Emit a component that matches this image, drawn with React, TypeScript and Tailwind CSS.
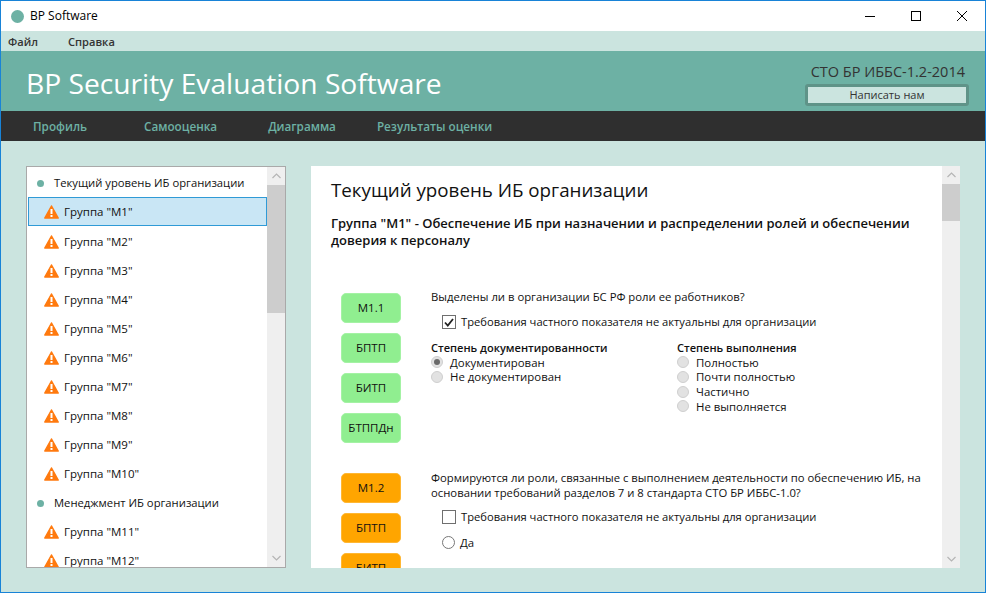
const font = "font-['Open_Sans','Noto_Sans',sans-serif]";

function WarningIcon() {
  return (
    <svg width="15" height="14" viewBox="0 0 15 14" className="shrink-0">
      <path d="M7.5 1 L14.2 13 L0.8 13 Z" fill="#ff7a0f" stroke="#ff7a0f" strokeWidth="1.5" strokeLinejoin="round" />
      <rect x="6.5" y="4" width="2" height="5" fill="#fff" />
      <rect x="6.5" y="10" width="2" height="2" fill="#fff" />
    </svg>
  );
}

function Chevron({ up }: { up?: boolean }) {
  return (
    <svg width="9" height="6" viewBox="0 0 9 6" fill="none" stroke="#b5b5b5" strokeWidth="1.2">
      <path d={up ? "M0.5 5 L4.5 1 L8.5 5" : "M0.5 1 L4.5 5 L8.5 1"} />
    </svg>
  );
}

function Scrollbar({ thumbTop, thumbHeight }: { thumbTop: string; thumbHeight: string }) {
  return (
    <div className="w-[18px] shrink-0 flex flex-col bg-[#efefef]">
      <div className={`${thumbTop} flex items-center justify-center shrink-0`}>
        <Chevron up />
      </div>
      <div className={`${thumbHeight} bg-[#cdcdcd] shrink-0`} />
      <div className="flex-1" />
      <div className="h-[18px] flex items-center justify-center shrink-0">
        <Chevron />
      </div>
    </div>
  );
}

function SectionRow({ label, className }: { label: string; className: string }) {
  return (
    <div className={`flex items-center pl-[10px] shrink-0 ${className}`}>
      <span className="w-[7px] h-[7px] rounded-full bg-[#6db1a4] mr-[10px]" />
      <span className="text-[11.25px] text-[#111]">{label}</span>
    </div>
  );
}

function GroupRow({ n, active }: { n: number; active?: boolean }) {
  return (
    <div
      className={`h-[29px] ml-px flex items-center pl-[15px] shrink-0 border ${
        active ? "bg-[#c9e6f5] border-[#2f9ad6] mb-px" : "border-transparent"
      }`}
    >
      <WarningIcon />
      <span className="ml-[5px] text-[11.5px] text-[#111]">Группа "М{n}"</span>
    </div>
  );
}

function Tag({ label, color }: { label: string; color: string }) {
  return (
    <div className={`w-[60px] h-[30px] rounded-[5px] border flex items-center justify-center text-[11.5px] text-[#111] shrink-0 ${color}`}>
      {label}
    </div>
  );
}

function Radio({ label, checked, white }: { label: string; checked?: boolean; white?: boolean }) {
  return (
    <div className="flex items-center h-[14.7px]">
      <span
        className={`rounded-full border flex items-center justify-center shrink-0 ${
          white ? "w-[13px] h-[13px] bg-white border-[#777777]" : "w-[12px] h-[12px] bg-[#e2e2e2] border-[#cfcfcf]"
        }`}
      >
        {checked && <span className="w-[6px] h-[6px] rounded-full bg-[#6a6a6a]" />}
      </span>
      <span className={`text-[11.4px] text-[#111] ${white ? "ml-[5px]" : "ml-[7px]"}`}>{label}</span>
    </div>
  );
}

function Check({ checked }: { checked?: boolean }) {
  return (
    <div className="flex items-center h-[16px] ml-[11px]">
      <span className="w-[14px] h-[14px] border border-[#6f6f6f] bg-white flex items-center justify-center shrink-0">
        {checked && (
          <svg width="10" height="9" viewBox="0 0 10 9" fill="none" stroke="#222" strokeWidth="1.8">
            <path d="M1 4.5 L3.8 7.5 L9 1" />
          </svg>
        )}
      </span>
      <span className="ml-[5px] text-[11.2px] text-[#111]">Требования частного показателя не актуальны для организации</span>
    </div>
  );
}

export default function App() {
  const first = [1, 2, 3, 4, 5, 6, 7, 8, 9, 10];
  const green = "bg-[#90ee90] border-[#a4f2a4]";
  const orange = "bg-[#ffa500] border-[#ffb733]";
  return (
    <div className={`${font} w-[986px] h-[593px] overflow-hidden flex flex-col border border-[#1883d7] bg-[#cbe4df]`}>
      {/* title bar */}
      <div className="h-[30px] bg-white flex items-center shrink-0">
        <span className="ml-[10px] w-[13px] h-[13px] rounded-full bg-[#6db1a4]" />
        <span className="ml-[6px] text-[12px] text-black">BP Software</span>
        <div className="ml-auto flex items-center">
          <svg width="46" height="30" viewBox="0 0 46 30" stroke="#000" fill="none"><path d="M18 15.5 H28" /></svg>
          <svg width="46" height="30" viewBox="0 0 46 30" stroke="#000" fill="none"><rect x="18.5" y="10.5" width="9" height="9" /></svg>
          <svg width="46" height="30" viewBox="0 0 46 30" stroke="#000" fill="none"><path d="M18 10 L28 20 M28 10 L18 20" /></svg>
        </div>
      </div>

      {/* menu */}
      <div className="h-[20px] flex items-center pl-[7px] pt-[2px] shrink-0 text-[11.1px] font-semibold text-[#333]">
        <span className="w-[60px]">Файл</span>
        <span>Справка</span>
      </div>

      {/* header */}
      <div className="h-[60px] bg-[#6db1a4] flex items-center justify-between pl-[25px] pr-[16px] shrink-0">
        <div className="text-[28.2px] text-white pt-[4px]">BP Security Evaluation Software</div>
        <div className="flex flex-col items-end pt-[7px]">
          <div className="text-[14.5px] text-[#333] mr-[4px] leading-[18px]">СТО БР ИББС-1.2-2014</div>
          <div className="w-[164px] h-[22px] mt-[3px] rounded-[3px] border-[3px] border-[#5f9388] bg-[#cbe4df] flex items-center justify-center text-[11px] text-[#333]">
            Написать нам
          </div>
        </div>
      </div>

      {/* nav */}
      <div className="h-[30px] bg-[#2f2f2f] flex items-center pt-[2px] shrink-0 text-[11.7px] font-semibold text-[#6db1a4]">
        <span className="ml-[32px]">Профиль</span>
        <span className="ml-[57px]">Самооценка</span>
        <span className="ml-[51px]">Диаграмма</span>
        <span className="ml-[41px]">Результаты оценки</span>
      </div>

      {/* body */}
      <div className="flex-1 min-h-0 flex gap-[25px] pt-[25px] pb-[24px] px-[25px]">
        <div className="w-[260px] border border-[#a9a9a9] bg-white flex overflow-hidden shrink-0">
          <div className="flex-1 flex flex-col overflow-hidden pt-[3px]">
            <SectionRow label="Текущий уровень ИБ организации" className="h-[27px]" />
            {first.map((n) => (
              <GroupRow key={n} n={n} active={n === 1} />
            ))}
            <SectionRow label="Менеджмент ИБ организации" className="h-[29px] pt-px" />
            <GroupRow n={11} />
            <GroupRow n={12} />
          </div>
          <Scrollbar thumbTop="h-[18px]" thumbHeight="h-[128px]" />
        </div>

        <div className="flex-1 bg-white flex overflow-hidden">
          <div className="flex-1 overflow-hidden pl-[20px] pr-[20px] pt-[11px]">
            <h1 className="text-[18.75px] leading-[26px] text-[#111]">Текущий уровень ИБ организации</h1>
            <h2 className="mt-[12px] text-[13px] leading-[17px] font-semibold text-[#111]">
              Группа "М1" - Обеспечение ИБ при назначении и распределении ролей и обеспечении доверия к персоналу
            </h2>

            <div className="mt-[44px] flex">
              <div className="w-[100px] pl-[10px] flex flex-col gap-[10px] shrink-0">
                <Tag label="М1.1" color={green} />
                <Tag label="БПТП" color={green} />
                <Tag label="БИТП" color={green} />
                <Tag label="БТППДн" color={green} />
              </div>
              <div className="flex-1 text-[#111]">
                <p className="text-[11.3px] leading-[16px] mt-[-4px]">Выделены ли в организации БС РФ роли ее работников?</p>
                <div className="mt-[9px]"><Check checked /></div>
                <div className="mt-[10px] flex">
                  <div className="w-[246px]">
                    <div className="text-[11.05px] font-semibold leading-[15px]">Степень документированности</div>
                    <Radio label="Документирован" checked />
                    <Radio label="Не документирован" />
                  </div>
                  <div>
                    <div className="text-[11.05px] font-semibold leading-[15px]">Степень выполнения</div>
                    <Radio label="Полностью" />
                    <Radio label="Почти полностью" />
                    <Radio label="Частично" />
                    <Radio label="Не выполняется" />
                  </div>
                </div>
              </div>
            </div>

            <div className="mt-[30px] flex">
              <div className="w-[100px] pl-[10px] flex flex-col gap-[10px] shrink-0">
                <Tag label="М1.2" color={orange} />
                <Tag label="БПТП" color={orange} />
                <Tag label="БИТП" color={orange} />
              </div>
              <div className="flex-1 text-[#111]">
                <p className="text-[11.3px] leading-[15px] mt-[-3px]">
                  Формируются ли роли, связанные с выполнением деятельности по обеспечению ИБ, на основании требований разделов 7 и 8 стандарта СТО БР ИББС-1.0?
                </p>
                <div className="mt-[9px]"><Check /></div>
                <div className="mt-[10px] ml-[11px]"><Radio label="Да" white /></div>
              </div>
            </div>
          </div>
          <Scrollbar thumbTop="h-[18px]" thumbHeight="h-[37px]" />
        </div>
      </div>
    </div>
  );
}
